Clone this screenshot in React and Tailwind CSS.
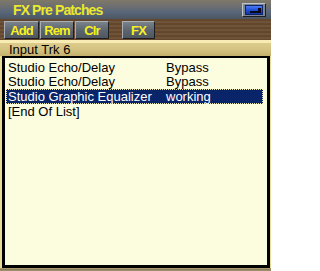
import React from "react";

const rows = [
  { name: "Studio Echo/Delay", state: "Bypass" },
  { name: "Studio Echo/Delay", state: "Bypass" },
  { name: "Studio Graphic Equalizer", state: "working", sel: true },
  { name: "[End Of List]", state: "" },
];

function Btn({ children, w }) {
  return (
    <div
      className={`${w} h-[18px] flex items-center justify-center border border-t-[#a8aeb4] border-l-[#a8aeb4] border-b-[#1e1e1e] border-r-[#1e1e1e] bg-[linear-gradient(180deg,#7a828a_0%,#5c6670_50%,#4e5760_100%)] text-[#f8f020] text-[13px] font-bold tracking-[-0.9px] leading-none`}
    >
      {children}
    </div>
  );
}

export default function App() {
  return (
    <div className="w-[271px] h-[271px] flex flex-col overflow-hidden bg-[#c8b878] font-['Liberation_Sans',Arial,sans-serif]">
      {/* title bar */}
      <div className="h-[19px] shrink-0 flex items-center pl-[13px] pr-[5px] bg-[linear-gradient(180deg,#7e7868_0%,#6c6e70_35%,#586679_65%,#4c5662_100%)]">
        <span className="text-[#ece82c] text-[14px] font-bold tracking-[-0.9px] leading-none">FX Pre Patches</span>
        <div className="ml-auto w-[24px] h-[14px] flex items-center justify-center border border-t-[#c0c4c8] border-l-[#c0c4c8] border-b-[#202020] border-r-[#202020] bg-[#7c8690]">
          <div className="w-[18px] h-[10px] relative bg-[linear-gradient(180deg,#4a7cf0_0%,#2050d8_50%,#1434a0_100%)] border border-[#10206a]">
            <div className="absolute left-[4px] top-[5px] w-[9px] h-[2px] bg-[#080818]" />
            <div className="absolute left-[12px] top-[2px] w-[3px] h-[5px] bg-[#080818]" />
          </div>
        </div>
      </div>
      {/* toolbar */}
      <div className="h-[21px] shrink-0 flex items-start pt-[2px] pl-[4px] gap-[1px] bg-[repeating-linear-gradient(180deg,#6b4e33_0px,#5a3f28_1px,#77593b_3px,#6b4e33_4px)]">
        <Btn w="w-[35px]">Add</Btn>
        <Btn w="w-[34px]">Rem</Btn>
        <Btn w="w-[34px]">Clr</Btn>
        <div className="w-[11px]" />
        <Btn w="w-[33px]">FX</Btn>
      </div>
      {/* header */}
      <div className="h-[3px] shrink-0 bg-[#f8ecb4]" />
      <div className="h-[13px] shrink-0 flex items-center pl-[9px] bg-[linear-gradient(180deg,#dccc8c_0%,#d2c07e_60%,#c4b06c_100%)]">
        <span className="text-black text-[13px] leading-none">Input Trk 6</span>
      </div>
      {/* list */}
      <div className="flex-1 flex pl-[2px] pr-[1px] bg-[#e8dc98]">
        <div className="flex-1 flex flex-col border-black border-t-2 border-l-[3px] border-r-[3px] border-b-[3px] bg-[#fcfcde] pt-[2px] pl-[1px] pr-[4px]">
          {rows.map((r, i) =>
            r.sel ? (
              <div
                key={i}
                className="h-[15px] mt-[1px] flex items-center bg-[#0a246a] text-white border border-dotted border-[#e8e8b8] text-[13px] leading-none"
              >
                <span className="w-[159px] pl-[1px]">{r.name}</span>
                <span>{r.state}</span>
              </div>
            ) : (
              <div key={i} className="h-[14px] flex items-center text-black text-[13px] leading-none">
                <span className="w-[160px] pl-[2px]">{r.name}</span>
                <span>{r.state}</span>
              </div>
            )
          )}
        </div>
      </div>
      <div className="h-[3px] shrink-0 bg-[linear-gradient(180deg,#b8a878_0%,#8a7c5c_50%,#a89870_100%)]" />
    </div>
  );
}
